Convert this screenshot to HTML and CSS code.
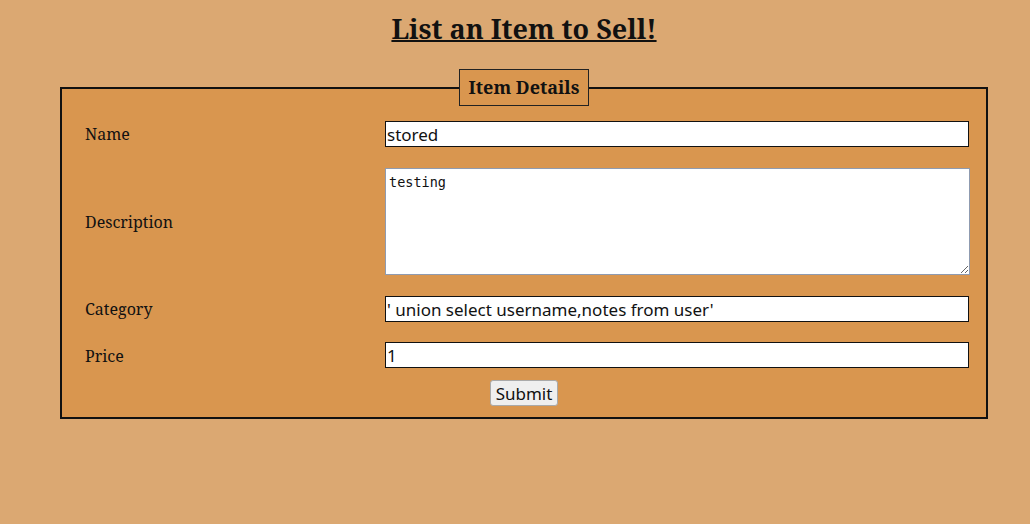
FILE: index.html
```html
<!DOCTYPE html>
<html>
<head>
<meta charset="utf-8">
<link rel="stylesheet" href="styles.css">
</head>
<body>
<h1 class="title">List an Item to Sell!</h1>
<form class="item-form">
  <fieldset class="details">
    <legend class="details-legend">Item Details</legend>
    <div class="rows">
      <label class="label">Name</label>
      <input class="field" type="text" value="stored">
      <label class="label">Description</label>
      <textarea class="area">testing</textarea>
      <label class="label">Category</label>
      <input class="field" type="text" value="' union select username,notes from user'">
      <label class="label">Price</label>
      <input class="field field-last" type="text" value="1">
    </div>
    <div class="actions">
      <button class="submit" type="button">Submit</button>
    </div>
  </fieldset>
</form>
</body>
</html>
```
FILE: styles.css
```css
html, body {
  margin: 0;
  padding: 0;
  background: #dba872;
}
body {
  font-family: "Noto Serif", "DejaVu Serif", serif;
  color: #111;
  padding: 12px 0 0 0;
}
.title {
  margin: 0;
  text-align: center;
  font-size: 27px;
  font-weight: bold;
  text-decoration: underline;
  text-decoration-thickness: 2px;
  padding-left: 18px;
  line-height: 34px;
}
.item-form {
  margin: 23px 42px 0 60px;
}
.details {
  margin: 0;
  border: 2px solid #111;
  background: #d9964f;
  padding: 0 23px 11px 23px;
  min-width: 0;
}
.details-legend {
  margin: 0 auto;
  border: 1px solid #222;
  background: #d9964f;
  padding: 5px 9px 6px 9px;
  font-weight: bold;
  font-size: 18px;
  line-height: 24px;
}
.rows {
  display: grid;
  grid-template-columns: 300px 1fr;
  align-items: center;
  row-gap: 21px;
  margin-top: 15px;
  margin-right: -6px;
}
.label {
  font-size: 16px;
}
.field {
  box-sizing: border-box;
  height: 26px;
  width: 100%;
  margin: 0;
  border: 1px solid #111;
  background: #fff;
  padding: 0 1px;
  font-family: "Noto Sans", "Open Sans", sans-serif;
  font-size: 17px;
  color: #111;
}
.field-last {
  margin-top: -1px;
}
.area {
  box-sizing: border-box;
  width: calc(100% + 1px);
  height: 107px;
  margin: 0;
  border: 1px solid #8f9bb0;
  background: #fff;
  padding: 5px 3px 2px 3px;
  font-family: "DejaVu Sans Mono", monospace;
  font-size: 13.5px;
  color: #111;
}
.actions {
  display: flex;
  justify-content: center;
  margin-top: 12px;
}
.submit {
  height: 26px;
  padding: 0 5px;
  border: 1px solid #aaa;
  border-radius: 3px;
  background: #efefef;
  font-family: "Noto Sans", "Open Sans", sans-serif;
  font-size: 17px;
  color: #111;
}
```
